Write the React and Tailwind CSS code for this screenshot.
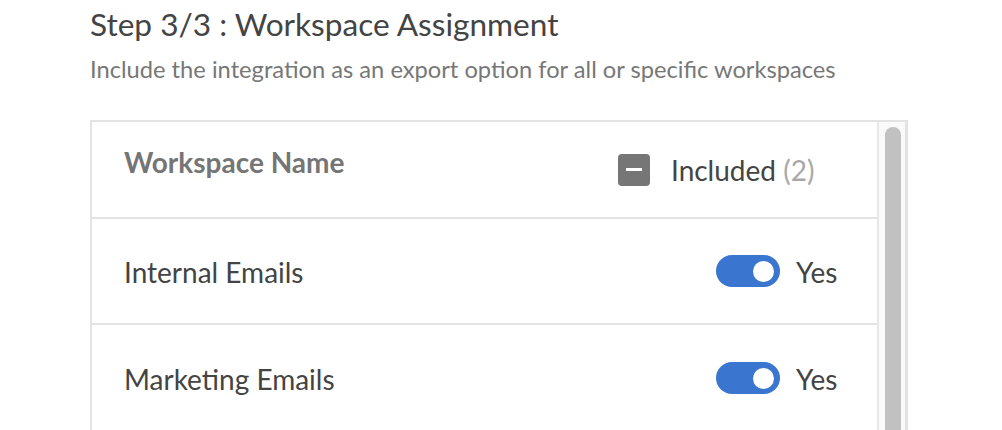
import { useState } from 'react'

const rows = [
  { id: 1, name: 'Internal Emails', on: true },
  { id: 2, name: 'Marketing Emails', on: true },
]

function Toggle({ on, onClick }) {
  return (
    <button
      onClick={onClick}
      className={`flex h-[32px] w-[64px] items-center rounded-full px-[6px] ${on ? 'justify-end bg-[#3a76cf]' : 'justify-start bg-[#c4c4c4]'}`}
    >
      <span className="h-[21px] w-[21px] rounded-full bg-white" />
    </button>
  )
}

export default function App() {
  const [items, setItems] = useState(rows)
  const count = items.filter(r => r.on).length

  return (
    <div className="h-[430px] overflow-hidden bg-white pl-[90px] pt-[4px] font-['Lato',sans-serif]">
      <h1 className="text-[31.6px] leading-[40px] text-[#444]">Step 3/3 : Workspace Assignment</h1>
      <p className="mt-[10px] text-[23.7px] leading-[30px] text-[#777]">
        Include the integration as an export option for all or specific workspaces
      </p>

      <div className="mt-[36px] flex h-[400px] w-[818px] border-2 border-r-[3px] border-[#e3e3e3]">
        <div className="flex-1">
          {/* Header */}
          <div className="grid h-[97px] grid-cols-[1fr_260px] border-b-2 border-[#e3e3e3]">
            <div className="pl-[32px] pt-[23px] text-[28px] leading-[34px] font-bold text-[#757575]">Workspace Name</div>
            <div className="flex items-center gap-[21px] pl-[1px]">
              <span className="flex h-[32px] w-[32px] items-center justify-center rounded-[4px] bg-[#767676]">
                <span className="h-[3px] w-[16px] bg-white" />
              </span>
              <span className="text-[28px] leading-[34px] text-[#444]">
                Included <span className="text-[#a8a8a8]">({count})</span>
              </span>
            </div>
          </div>

          {items.map(r => (
            <div key={r.id} className="grid h-[106px] grid-cols-[1fr_260px] border-b-2 border-[#e3e3e3] last:border-b-0">
              <div className="flex items-center pl-[32px] pt-[2px] text-[28px] leading-[34px] text-[#444]">{r.name}</div>
              <div className="flex items-center gap-[16px] pl-[99px]">
                <Toggle
                  on={r.on}
                  onClick={() => setItems(items.map(i => (i.id === r.id ? { ...i, on: !i.on } : i)))}
                />
                <span className="pt-[2px] text-[28px] leading-[34px] text-[#444]">{r.on ? 'Yes' : 'No'}</span>
              </div>
            </div>
          ))}
        </div>

        {/* Scrollbar */}
        <div className="w-[28px] border-l-2 border-[#e8e8e8] bg-[#fafafa] px-[6px] pt-[5px]">
          <div className="h-[360px] w-[16px] rounded-full bg-[#c1c1c1]" />
        </div>
      </div>
    </div>
  )
}
